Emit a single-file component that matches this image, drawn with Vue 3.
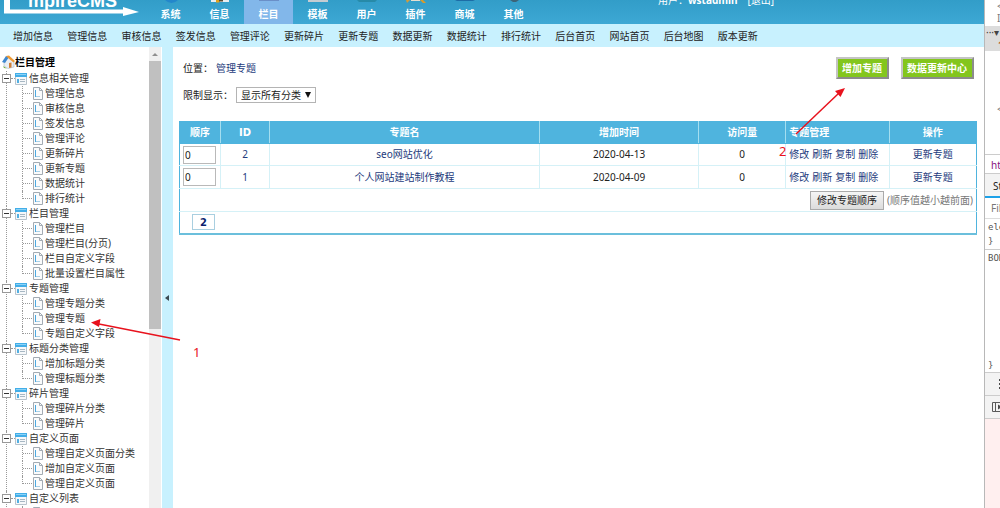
<script setup>
import { ref } from 'vue'

const tabs = [
  { name: '系统', icon: 'globe' },
  { name: '信息', icon: 'edit' },
  { name: '栏目', icon: 'column', active: true },
  { name: '模板', icon: 'template' },
  { name: '用户', icon: 'user' },
  { name: '插件', icon: 'plugin' },
  { name: '商城', icon: 'shop' },
  { name: '其他', icon: 'other' },
]

const quickLinks = [
  '增加信息', '管理信息', '审核信息', '签发信息', '管理评论', '更新碎片', '更新专题',
  '数据更新', '数据统计', '排行统计', '后台首页', '网站首页', '后台地图', '版本更新',
]

const groups = [
  { name: '信息相关管理', items: ['管理信息', '审核信息', '签发信息', '管理评论', '更新碎片', '更新专题', '数据统计', '排行统计'] },
  { name: '栏目管理', items: ['管理栏目', '管理栏目(分页)', '栏目自定义字段', '批量设置栏目属性'] },
  { name: '专题管理', items: ['管理专题分类', '管理专题', '专题自定义字段'] },
  { name: '标题分类管理', items: ['增加标题分类', '管理标题分类'] },
  { name: '碎片管理', items: ['管理碎片分类', '管理碎片'] },
  { name: '自定义页面', items: ['管理自定义页面分类', '增加自定义页面', '管理自定义页面'] },
  { name: '自定义列表', items: ['管理自定义列表'] },
]

const rows = ref([
  { order: '0', id: 2, name: 'seo网站优化', date: '2020-04-13', hits: 0 },
  { order: '0', id: 1, name: '个人网站建站制作教程', date: '2020-04-09', hits: 0 },
])
const actions = ['修改', '刷新', '复制', '删除']
</script>

<template>
  <div class="screen">
    <div class="admin">
      <header class="top">
        <div class="logo">
          <svg class="logo-mark" width="140" height="16" viewBox="0 0 140 16" aria-hidden="true">
            <path d="M4 0h6v9.500h113v-2.500l16 5-16 4v-2.500H4z" fill="#fff" />
          </svg>
          <span class="logo-text">mpireCMS</span>
        </div>
        <nav class="tabs">
          <a v-for="tab in tabs" :key="tab.name" href="#" class="tab" :class="{ active: tab.active }">
            <svg class="tab-icon" width="20" height="4" viewBox="0 0 20 4" aria-hidden="true">
              <path v-if="tab.icon === 'globe'" d="M4 0h13q-3 3-6.500 3T4 0z" fill="#2387cb" />
              <g v-else-if="tab.icon === 'edit'">
                <path d="M1 0h18v2H1z" fill="#e8edf0" />
                <path d="M6 0h5l-2 2.500H6z" fill="#e0a21c" />
                <path d="M9 0h4v1.500H9z" fill="#5b4b35" />
              </g>
              <path v-else-if="tab.icon === 'column'" d="M0 0h20v1H0z" fill="#6a8fc8" />
              <path v-else-if="tab.icon === 'template'" d="M0 0h20v2H0z" fill="#c5ccd2" />
              <path v-else-if="tab.icon === 'user'" d="M0 0h20l-2 2H2z" fill="#278aa8" />
              <g v-else-if="tab.icon === 'plugin'">
                <path d="M0 0h4L1 3z" fill="#cf9c3c" />
                <path d="M5 0h9v1H5z" fill="#e8dfcf" />
                <path d="M14 0h3l3 3h-3z" fill="#d99b28" />
              </g>
              <path v-else-if="tab.icon === 'shop'" d="M0 0h20l-2 1H2z" fill="#1d6ca6" />
              <path v-else d="M6 0h9l-3 2H9z" fill="#3c6478" />
            </svg>
            <span>{{ tab.name }}</span>
          </a>
        </nav>
        <div class="account">
          <span>用户：</span>
          <strong>wstadmin</strong>
          <a href="#">[退出]</a>
        </div>
      </header>

      <nav class="quick">
        <a v-for="link in quickLinks" :key="link" href="#">{{ link }}</a>
      </nav>

      <div class="body">
        <aside class="side">
          <div class="tree">
            <h2 class="tree-title">
              <svg width="13" height="14" viewBox="0 0 13 14" aria-hidden="true">
                <path d="M2 6l5-4 5 5v5l-6 1.500L2 11z" fill="#e9eef4" stroke="#a9b7c9" stroke-width=".6" />
                <path d="M0 7L4 1l3 1-4 6z" fill="#3d87cf" />
                <path d="M4 1l3-.5L13 6l-1.500 1.500L6 3z" fill="#ee9a35" />
                <path d="M7 8l2.500-.5v5L7 13z" fill="#d07f36" />
                <path d="M1 11l4 2.500-3-.5z" fill="#71ad3a" />
              </svg>
              栏目管理
            </h2>
            <ul class="groups">
              <li v-for="group in groups" :key="group.name" class="group">
                <div class="group-head">
                  <button type="button" class="toggle" :aria-label="`折叠 ${group.name}`"></button>
                  <svg class="group-icon" width="12" height="12" viewBox="0 0 12 12" aria-hidden="true">
                    <path d="M.5 .5h11v11H.5z" fill="#f6f8fa" stroke="#b7c3cc" />
                    <path d="M0 0h12v4H0z" fill="#43aee8" />
                    <path d="M1 1h10v1H1z" fill="#8bd2f6" />
                    <path d="M2 6h2v4H2z" fill="#52afe2" />
                    <path d="M5 6h5v1H5zM5 8h5v1H5z" fill="#a7b8c4" />
                  </svg>
                  <a href="#">{{ group.name }}</a>
                </div>
                <ul class="items">
                  <li v-for="item in group.items" :key="item" class="item">
                    <svg width="10" height="13" viewBox="0 0 10 13" aria-hidden="true">
                      <path d="M.5 .5h6l3 3v9h-9z" fill="#fafbfc" stroke="#a3abb3" />
                      <path d="M6.500 .5v3h3" fill="none" stroke="#a3abb3" />
                      <path d="M2 3h1v7H2z" fill="#4aa8e0" />
                      <path d="M3 9h4v1H3z" fill="#a9cfe6" />
                    </svg>
                    <a href="#">{{ item }}</a>
                  </li>
                </ul>
              </li>
            </ul>
          </div>
          <div class="scroll" aria-hidden="true">
            <svg class="scroll-up" width="12" height="14" viewBox="0 0 12 14"><path d="M3 9l3-3 3 3z" fill="#8f8f8f" /></svg>
            <div class="thumb"></div>
          </div>
        </aside>

        <button type="button" class="splitter" aria-label="收起菜单">
          <svg width="4" height="6" viewBox="0 0 4 6" aria-hidden="true"><path d="M4 0v6L0 3z" fill="#3a4a52" /></svg>
        </button>

        <main class="main">
          <div class="heading">
            <p class="crumb">位置：<a href="#">管理专题</a></p>
            <button type="button" class="green">增加专题</button>
            <button type="button" class="green">数据更新中心</button>
          </div>
          <div class="filter">
            <label for="category">限制显示：</label>
            <span class="select-box">
              <select id="category">
                <option>显示所有分类</option>
              </select>
              <svg width="6" height="6" viewBox="0 0 6 6" aria-hidden="true"><path d="M0 0h6L3 6z" fill="#111" /></svg>
            </span>
          </div>

          <table class="grid">
            <colgroup>
              <col class="c-order" /><col class="c-id" /><col class="c-name" /><col class="c-date" />
              <col class="c-hits" /><col class="c-manage" /><col class="c-op" />
            </colgroup>
            <thead>
              <tr>
                <th>顺序</th><th class="wide">ID</th><th>专题名</th><th>增加时间</th><th>访问量</th>
                <th class="left">专题管理</th><th>操作</th>
              </tr>
            </thead>
            <tbody>
              <tr v-for="row in rows" :key="row.id">
                <td class="left"><input v-model="row.order" type="text" class="order" :aria-label="`${row.name} 顺序`" /></td>
                <td><a href="#">{{ row.id }}</a></td>
                <td><a href="#">{{ row.name }}</a></td>
                <td>{{ row.date }}</td>
                <td>{{ row.hits }}</td>
                <td class="left"><span class="actions"><a v-for="a in actions" :key="a" href="#">{{ a }}</a></span></td>
                <td><a href="#">更新专题</a></td>
              </tr>
              <tr>
                <td colspan="7">
                  <div class="reorder">
                    <button type="button" class="plain">修改专题顺序</button>
                    <span>(顺序值越小越前面)</span>
                  </div>
                </td>
              </tr>
              <tr>
                <td colspan="7" class="left"><a href="#" class="count">2</a></td>
              </tr>
            </tbody>
          </table>
        </main>
      </div>
    </div>

    <aside class="dev">
      <div class="dom">
        <div class="dom-top"><span>&lt;</span><span>I</span></div>
        <div class="dom-selected"><span>···▾</span><b>1</b></div>
        <div class="dom-rest">&lt;</div>
      </div>
      <div class="dev-path">html</div>
      <div class="dev-tab">Styles</div>
      <div class="dev-filter">Filter</div>
      <div class="rule">element<br />}</div>
      <div class="rule body-rule"><span>BODY</span><span>}</span></div>
      <div class="dev-bar">
        <svg width="12" height="12" viewBox="0 0 12 12" aria-hidden="true"><path d="M9 1h3v2H9zM9 5h3v2H9zM9 9h3v2H9z" fill="#4c4c4c" /></svg>
      </div>
      <div class="dev-bar">
        <svg width="12" height="12" viewBox="0 0 12 12" aria-hidden="true"><path d="M12 1.500H2.500v9H12M5.500 1.500v9" fill="none" stroke="#5a5a5a" /><path d="M8 3.500v5l4-2.500z" fill="#4c4c4c" /></svg>
      </div>
      <div class="dev-errors"></div>
    </aside>

    <svg class="mark mark-one" width="116" height="44" viewBox="0 0 116 44">
      <path d="M9 8L90 24" stroke="#e8121d" stroke-width="1.500" />
      <path d="M1 6.500l9.500-3.500-1.500 8z" fill="#e8121d" />
      <text x="103" y="41">1</text>
    </svg>
    <svg class="mark mark-two" width="68" height="74" viewBox="0 0 68 74">
      <path d="M17 51L60 10" stroke="#e8121d" stroke-width="1.500" />
      <path d="M66 5l-10 3 5.500 6z" fill="#e8121d" />
      <text x="0" y="73">2</text>
    </svg>
  </div>
</template>

<style>
html, body { margin: 0; overflow: hidden; }
</style>

<style scoped>
.screen {
  position: relative;
  display: flex;
  height: 100vh;
  overflow: hidden;
  background: #fff;
  color: #222;
  font: 10px/15px "Noto Sans", "Noto Sans CJK SC", sans-serif;
}
a { color: inherit; text-decoration: none; }
ul, p, h2 { margin: 0; padding: 0; list-style: none; }
button, input, select { font: inherit; box-sizing: border-box; margin: 0; }
svg { display: block; flex: none; }

.admin { flex: 1; min-width: 0; display: flex; flex-direction: column; }

.top {
  display: flex;
  height: 24px;
  flex: none;
  overflow: hidden;
  background: linear-gradient(#329dc8, #3da8d4);
  color: #fff;
}
.logo { position: relative; width: 146px; flex: none; }
.logo-text {
  position: absolute;
  left: 28px;
  bottom: 13px;
  font: bold 18px/20px "Liberation Sans", sans-serif;
}
.tabs { display: flex; width: 512px; }
.tab {
  width: 49px;
  display: flex;
  flex-direction: column;
  align-items: center;
  gap: 3px;
  font-weight: bold;
}
.tab.active { background: #82b7ea; }
.account { display: flex; gap: 3px; height: 15px; margin-top: -7px; white-space: nowrap; }
.account strong { margin-left: -3px; }
.account a { margin-left: 7px; }

.quick {
  display: flex;
  justify-content: space-between;
  flex: none;
  width: 745px;
  height: 23px;
  padding-left: 13px;
  line-height: 24px;
  white-space: nowrap;
}
.admin { background: #c8f1fe; }

.body { flex: 1; min-height: 0; display: flex; background: #fff; }
.side { display: flex; width: 162px; flex: none; overflow: hidden; }
.tree { flex: 1; min-width: 0; overflow: hidden; padding-top: 8px; white-space: nowrap; }
.tree-title { display: flex; padding-left: 2px; font-size: 10px; line-height: 15px; color: #000; }
.groups { padding-top: 1px; color: #333; }
.group { position: relative; }
.group::before {
  content: "";
  position: absolute;
  left: 6px;
  top: 0;
  bottom: 0;
  border-left: 1px dotted #999;
}
.group-head { display: flex; align-items: center; height: 15px; padding-left: 2px; }
.toggle {
  position: relative;
  width: 9px;
  height: 9px;
  padding: 0;
  border: 1px solid #999;
  border-radius: 0;
  background: linear-gradient(#333, #333) center / 5px 1px no-repeat #fff;
}
.group-head::after {
  content: "";
  order: 1;
  width: 4px;
  border-top: 1px dotted #999;
}
.group-icon { order: 2; }
.group-head a { order: 3; margin-left: 2px; }
.item { position: relative; display: flex; align-items: center; gap: 2px; height: 15px; padding-left: 33px; }
.item::before {
  content: "";
  position: absolute;
  left: 22px;
  top: 0;
  height: 15px;
  border-left: 1px dotted #999;
}
.item:last-child::before { height: 8px; }
.item::after {
  content: "";
  position: absolute;
  left: 23px;
  top: 7px;
  width: 9px;
  border-top: 1px dotted #999;
}

.scroll { width: 12px; margin-right: 1px; background: #f0f0f0; }
.thumb { height: 268px; background: #c0c0c0; }

.splitter {
  display: flex;
  align-items: center;
  justify-content: center;
  width: 11px;
  padding: 40px 1px 0 0;
  border: 0;
  flex: none;
  background: #c8f1fe;
}

.main { flex: 1; min-width: 0; padding: 10px 7px 0 6px; }
.heading { display: flex; gap: 12px; padding: 0 3px 0 4px; height: 22px; line-height: 22px; }
.crumb { flex: 1; }
.crumb a { margin-left: 3px; color: #243b7c; }
.green {
  padding: 0 5px 0 4px;
  border: 2px solid;
  border-color: #c4c4c4 #8c8c8c #8c8c8c #c4c4c4;
  background: #83c61d;
  color: #fff;
  font-weight: bold;
  line-height: 18px;
}
.filter { display: flex; align-items: center; gap: 3px; height: 16px; margin: 8px 4px 18px; }
.select-box { display: grid; align-items: center; }
.select-box select, .select-box svg { grid-area: 1 / 1; }
.select-box svg { justify-self: end; margin-right: 5px; pointer-events: none; }
select {
  appearance: none;
  width: 80px;
  height: 16px;
  padding: 0 0 0 4px;
  border: 1px solid #b4b4b4;
  border-radius: 0;
  background: #fff;
  color: #222;
  line-height: 14px;
}

.grid {
  width: 100%;
  table-layout: fixed;
  border-collapse: collapse;
  border: 1px solid #4fb4de;
  border-bottom-width: 2px;
}
.c-order { width: 41px; }
.c-id { width: 49px; }
.c-name { width: 34%; }
.c-date { width: 20%; }
.c-hits { width: 11%; }
.c-manage { width: 13%; }
.c-op { width: 11%; }
.grid th, .grid td {
  box-sizing: border-box;
  height: 22px;
  padding: 0 3px;
  border: 1px solid #d5f1f7;
  text-align: center;
  vertical-align: middle;
  white-space: nowrap;
}
.grid tr:nth-child(2) > td, .grid tr:nth-child(3) > td { height: 23px; }
.grid th { background: #4fb4de; color: #fff; border-color: #4fb4de #a4def0; }
.grid tr > :first-child { border-left-color: #4fb4de; }
.grid tr > :last-child { border-right-color: #4fb4de; }
.grid tr:last-child > td { border-bottom: 2px solid #6bbfdc; }
.grid .left { text-align: left; }
.grid td a { color: #243b7c; }
.grid .wide { font-family: "DejaVu Sans", sans-serif; }
.order {
  display: block;
  width: 33px;
  height: 18px;
  padding: 0 1px;
  border: 1px solid #b9b9b9;
  color: #222;
}
.actions { display: flex; gap: 3px; }
.reorder { display: flex; justify-content: flex-end; align-items: center; gap: 3px; color: #777; }
.plain {
  height: 19px;
  padding: 0 6px;
  border: 1px solid #aaa;
  border-radius: 0;
  background: linear-gradient(#f5f5f5, #dcdcdc);
  color: #222;
  line-height: 15px;
}
.grid .count {
  display: block;
  box-sizing: border-box;
  width: 23px;
  height: 16px;
  margin-left: 9px;
  border: 1px solid #a9cfe0;
  color: #0b1f6e;
  font: bold 10px/16px "DejaVu Sans", sans-serif;
  text-align: center;
}

.dev {
  display: flex;
  flex-direction: column;
  width: 16px;
  box-sizing: border-box;
  flex: none;
  overflow: hidden;
  border-left: 1px solid #b8b8b8;
  white-space: nowrap;
}
.dev > div { box-sizing: border-box; flex: none; overflow: hidden; }
.dom { height: 155px; border-bottom: 1px solid #ccc; color: #777; }
.dom-top { display: flex; flex-direction: column; height: 26px; padding-left: 12px; line-height: 12px; }
.dom-selected { display: flex; flex-direction: column; height: 25px; padding-left: 1px; background: #dcdcdc; line-height: 13px; color: #444; }
.dom-selected b { padding-left: 12px; color: #b5622c; }
.dom-rest { padding: 51px 0 0 12px; }
.dev-path { height: 19px; padding-left: 6px; border-bottom: 1px solid #ccc; color: #881280; line-height: 20px; }
.dev-tab { height: 24px; padding-left: 8px; border-bottom: 2px solid #1da1e8; background: #f3f3f3; line-height: 24px; }
.dev-filter { height: 21px; padding-left: 6px; border-bottom: 1px solid #ddd; color: #777; line-height: 21px; }
.rule { height: 31px; padding: 1px 0 0 3px; border-bottom: 1px solid #ccc; font: 9px/14px "DejaVu Sans Mono", monospace; color: #555; }
.dev .body-rule { display: flex; flex-direction: column; justify-content: space-between; height: 123px; }
.dev-bar { display: flex; align-items: center; height: 23px; padding-left: 5px; border-bottom: 1px solid #ccc; background: #f3f3f3; }
.dev .dev-errors { flex: 1; background: #ffefef; }

.mark { position: absolute; overflow: visible; pointer-events: none; fill: none; }
.mark text { fill: #e8121d; font: 13px "Noto Sans", sans-serif; }
.mark-one { left: 90px; top: 316px; }
.mark-two { left: 779px; top: 83px; }
</style>
